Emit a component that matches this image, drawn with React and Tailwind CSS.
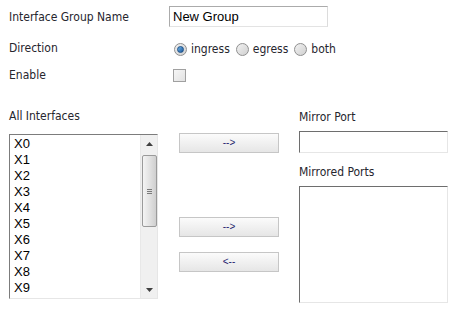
import React from "react";

const lbl = "text-[12px] text-[#26262e] leading-[16px]";
const font = { fontFamily: '"DejaVu Sans Condensed", "Liberation Sans", sans-serif' };

function Radio({ checked }) {
  return (
    <span className="relative inline-block w-[13px] h-[13px] rounded-full border border-[#8f8f8f] bg-gradient-to-br from-[#f2f2f2] to-[#d0d0d0] shrink-0 align-middle">
      {checked && (
        <span className="absolute left-[2px] top-[2px] w-[7px] h-[7px] rounded-full bg-gradient-to-br from-[#6fb3e8] to-[#1d5a9c] border border-[#1c4f86]" />
      )}
    </span>
  );
}

function Btn({ children }) {
  return (
    <div className="w-[100px] h-[20px] border border-[#c6c6c6] bg-gradient-to-b from-[#fbfbfb] to-[#e6e6e6] flex items-center justify-center text-[10px] text-[#1e1e6e] leading-none" style={{ fontFamily: '"Liberation Sans", sans-serif' }}>
      {children}
    </div>
  );
}

export default function App() {
  const items = ["X0", "X1", "X2", "X3", "X4", "X5", "X6", "X7", "X8", "X9"];
  return (
    <div className="w-[467px] h-[315px] bg-white pt-[6px] pl-[9px]" style={font}>
      {/* Row 1 */}
      <div className="flex items-center h-[21px]">
        <div className={`w-[160px] ${lbl}`}>Interface Group Name</div>
        <div className="w-[159px] h-[21px] border border-[#ababab] border-b-[#e3e3e3] border-r-[#dcdcdc] flex items-center pl-[3px] text-[13px] text-black" style={{ fontFamily: '"Liberation Sans", sans-serif' }}>
          New Group
        </div>
      </div>
      {/* Row 2 */}
      <div className="flex items-center h-[18px] mt-[12px]">
        <div className={`w-[165px] ${lbl}`}>Direction</div>
        <div className={`flex items-center ${lbl} mt-[2px]`}>
          <Radio checked />
          <span className="ml-[4px]">ingress</span>
          <span className="ml-[6px] flex"><Radio /></span>
          <span className="ml-[4px]">egress</span>
          <span className="ml-[6px] flex"><Radio /></span>
          <span className="ml-[4px]">both</span>
        </div>
      </div>
      {/* Row 3 */}
      <div className="flex items-center h-[18px] mt-[9px]">
        <div className={`w-[164px] ${lbl}`}>Enable</div>
        <span className="w-[13px] h-[13px] border border-[#a0a0a0] bg-gradient-to-br from-[#f6f6f6] to-[#e2e2e2] mt-[1px]" />
      </div>
      {/* Lists section */}
      <div className="flex items-start mt-[24px]">
        <div className="w-[149px]">
          <div className={lbl}>All Interfaces</div>
          <div className="mt-[10px] h-[165px] border border-[#7c7c7c] border-b-[#e6e6e6] border-r-[#e6e6e6] flex">
            <div className="flex-1 pl-[4px] pt-[1px] text-[13px] leading-[16px] text-black overflow-hidden" style={{ fontFamily: '"Liberation Sans", sans-serif' }}>
              {items.map((i) => (
                <div key={i}>{i}</div>
              ))}
            </div>
            <div className="w-[17px] h-full bg-[#f0f0f0] border-l border-[#e8e8e8] flex flex-col items-center">
              <div className="h-[18px] w-full flex items-center justify-center">
                <svg width="7" height="4" viewBox="0 0 7 4"><path d="M3.5 0 L7 4 L0 4 Z" fill="#404040" /></svg>
              </div>
              <div className="w-[15px] h-[72px] mt-[2px] border border-[#9a9a9a] rounded-[2px] bg-gradient-to-r from-[#f4f4f4] via-[#e2e2e2] to-[#cfcfcf] flex items-center justify-center">
                <div className="flex flex-col gap-[1px]">
                  <div className="w-[5px] h-[1px] bg-[#7a7a7a]" />
                  <div className="w-[5px] h-[1px] bg-[#7a7a7a]" />
                  <div className="w-[5px] h-[1px] bg-[#7a7a7a]" />
                </div>
              </div>
              <div className="flex-1" />
              <div className="h-[17px] w-full flex items-center justify-center">
                <svg width="7" height="4" viewBox="0 0 7 4"><path d="M0 0 L7 0 L3.5 4 Z" fill="#404040" /></svg>
              </div>
            </div>
          </div>
        </div>
        <div className="ml-[21px] w-[100px] pt-[25px] flex flex-col">
          <Btn>--&gt;</Btn>
          <div className="mt-[64px]"><Btn>--&gt;</Btn></div>
          <div className="mt-[15px]"><Btn>&lt;--</Btn></div>
        </div>
        <div className="ml-[20px] w-[149px] pt-[1px]">
          <div className={lbl}>Mirror Port</div>
          <div className="mt-[6px] h-[22px] border border-[#6e6e6e] border-b-[#e6e6e6] border-r-[#e6e6e6]" />
          <div className={`mt-[11px] ${lbl}`}>Mirrored Ports</div>
          <div className="mt-[6px] h-[117px] border border-[#6e6e6e] border-b-[#e6e6e6] border-r-[#e6e6e6]" />
        </div>
      </div>
    </div>
  );
}
